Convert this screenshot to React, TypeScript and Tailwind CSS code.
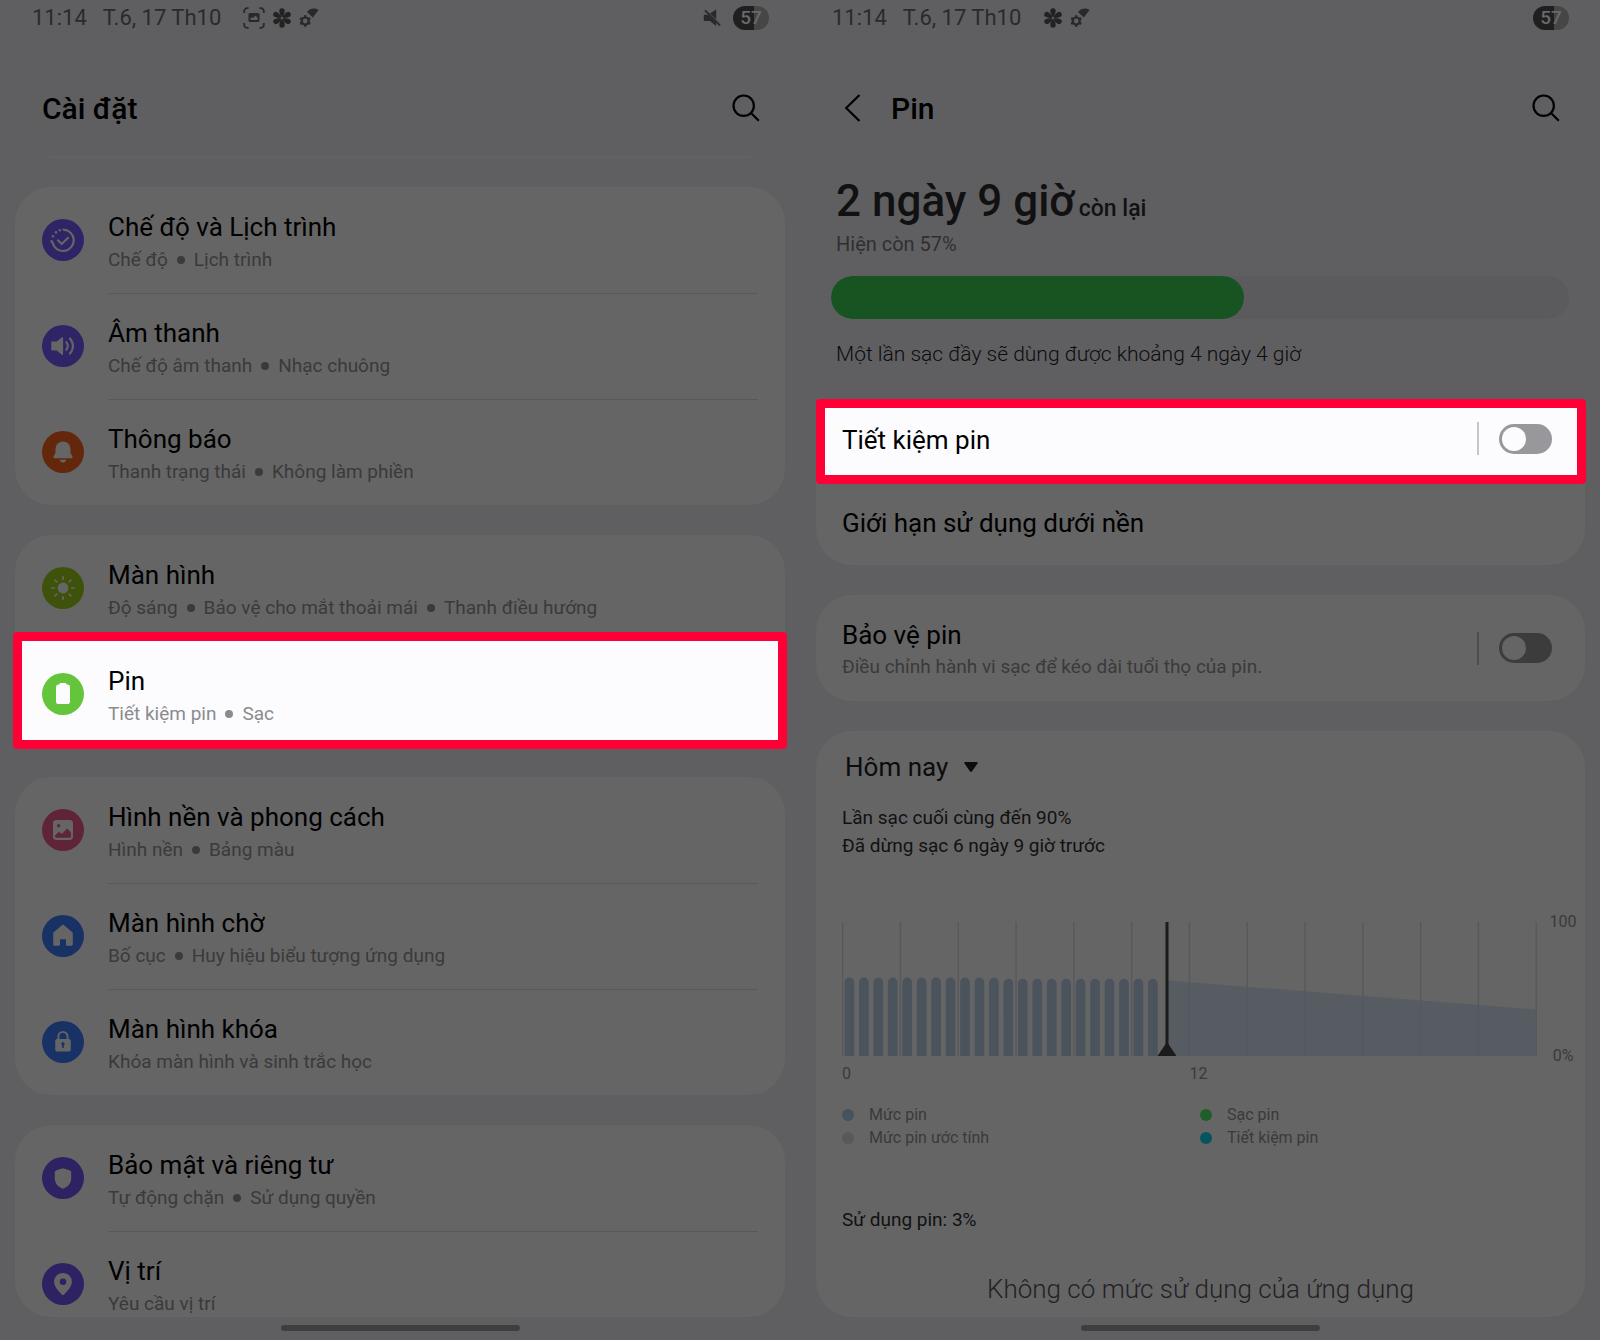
import type { ReactNode } from "react";

interface SettingItem {
  title: string;
  details: string[];
  color: string;
  icon: ReactNode;
  highlighted?: boolean;
}

const INK = "#656566";

const GROUPS: SettingItem[][] = [
  [
    {
      title: "Chế độ và Lịch trình",
      details: ["Chế độ", "Lịch trình"],
      color: "bg-[#2e2466]",
      icon: (
        <g fill="none" stroke={INK} strokeWidth="2.2" strokeLinecap="round" strokeLinejoin="round">
          <path d="M21.5 10.6a10.7 10.7 0 1 1-10.9 13" />
          <path d="M9.6 22.4v.1M11 17.2v.1M14 13.4v.1M17.8 11.2v.1" strokeWidth="2.6" />
          <path d="m16 21.3 3.7 3.7 6.4-6.2" />
        </g>
      ),
    },
    {
      title: "Âm thanh",
      details: ["Chế độ âm thanh", "Nhạc chuông"],
      color: "bg-[#2e2466]",
      icon: (
        <>
          <path d="M10.3 16.6h4.4l5.2-4.4c.6-.5 1.2-.2 1.2.6v16.4c0 .8-.6 1.1-1.2.6l-5.2-4.4h-4.4c-.7 0-1.1-.4-1.1-1.1v-6.6c0-.7.4-1.1 1.1-1.1z" fill={INK} />
          <g fill="none" stroke={INK} strokeWidth="2.1" strokeLinecap="round">
            <path d="M24.3 17.2a6.3 6.3 0 0 1 0 7.6" />
            <path d="M27.9 13.4a11 11 0 0 1 0 15.2" />
          </g>
        </>
      ),
    },
    {
      title: "Thông báo",
      details: ["Thanh trạng thái", "Không làm phiền"],
      color: "bg-[#63280b]",
      icon: (
        <g fill={INK}>
          <path d="M21 10.4c-4.3 0-7.2 3-7.4 7.2l-.2 4.3-1.8 3.6c-.5 1 0 1.8 1 1.8h16.8c1 0 1.5-.8 1-1.8l-1.8-3.6-.2-4.3c-.2-4.2-3.1-7.2-7.4-7.2z" />
          <path d="M17.8 28.8h6.4c-.5 1.9-1.6 2.8-3.2 2.8s-2.7-.9-3.2-2.8z" />
        </g>
      ),
    },
  ],
  [
    {
      title: "Màn hình",
      details: ["Độ sáng", "Bảo vệ cho mắt thoải mái", "Thanh điều hướng"],
      color: "bg-[#3e520b]",
      icon: (
        <>
          <circle cx="21" cy="21" r="5.4" fill={INK} />
          <path
            d="M21 9.8v2.4M21 29.8v2.4M9.8 21h2.4M29.8 21h2.4M13.1 13.1l1.7 1.7M27.2 27.2l1.7 1.7M13.1 28.9l1.7-1.7M27.2 14.8l1.7-1.7"
            stroke={INK}
            strokeWidth="1.7"
            strokeLinecap="round"
          />
        </>
      ),
    },
    {
      title: "Pin",
      details: ["Tiết kiệm pin", "Sạc"],
      color: "bg-[#64c43b]",
      highlighted: true,
      icon: (
        <path
          d="M18.6 10h4.8c.6 0 1 .4 1.1 1l.1.6h.8c1.600 0 2.600 1 2.600 2.600v14.300c0 1.600-1 2.600-2.600 2.600h-8.800c-1.600 0-2.600-1-2.600-2.600v-14.300c0-1.600 1-2.600 2.600-2.600h.8l.1-.6c.1-.6.5-1 1.100-1z"
          fill="#fcfcfe"
        />
      ),
    },
  ],
  [
    {
      title: "Hình nền và phong cách",
      details: ["Hình nền", "Bảng màu"],
      color: "bg-[#602439]",
      icon: (
        <>
          <rect x="11" y="11" width="20" height="20" rx="3.400" fill={INK} />
          <circle cx="16.600" cy="16.800" r="1.700" fill="#602439" />
          <path d="M13 26.400l3.900-3.700 3 2.300 5.200-5.600 3.900 4v3.900c0 .9-.6 1.500-1.500 1.500H14.500c-.9 0-1.500-.6-1.500-1.500z" fill="#602439" />
        </>
      ),
    },
    {
      title: "Màn hình chờ",
      details: ["Bố cục", "Huy hiệu biểu tượng ứng dụng"],
      color: "bg-[#183266]",
      icon: (
        <path
          d="M20 10.200c.6-.5 1.400-.5 2 0l8.100 6.700c.5.400.7.900.7 1.500v10.800c0 .9-.6 1.500-1.500 1.500h-4.200c-.7 0-1.100-.4-1.100-1.100v-5.400h-6v5.400c0 .7-.4 1.100-1.100 1.100h-4.200c-.9 0-1.500-.6-1.500-1.500V18.400c0-.6.2-1.100.7-1.500z"
          fill={INK}
        />
      ),
    },
    {
      title: "Màn hình khóa",
      details: ["Khóa màn hình và sinh trắc học"],
      color: "bg-[#183266]",
      icon: (
        <>
          <path d="M16.400 19v-3.500a4.600 4.600 0 0 1 9.200 0V19" fill="none" stroke={INK} strokeWidth="1.900" />
          <rect x="13.200" y="18" width="15.600" height="12.400" rx="2" fill={INK} />
          <path d="M21 21.200a1.700 1.700 0 0 0-.8 3.200V27h1.600v-2.600a1.700 1.700 0 0 0-.8-3.200z" fill="#183266" />
        </>
      ),
    },
  ],
  [
    {
      title: "Bảo mật và riêng tư",
      details: ["Tự động chặn", "Sử dụng quyền"],
      color: "bg-[#2e2262]",
      icon: (
        <path
          d="M21 11.200c2.400.5 4.700 1.200 7 2.200.8.300 1.200.9 1.200 1.700v6.300c0 4.800-3.200 8.200-8.200 10.400-5-2.200-8.200-5.600-8.200-10.400v-6.300c0-.8.4-1.400 1.200-1.700 2.300-1 4.600-1.700 7-2.200z"
          fill={INK}
        />
      ),
    },
    {
      title: "Vị trí",
      details: ["Yêu cầu vị trí"],
      color: "bg-[#2e2262]",
      icon: (
        <path
          fillRule="evenodd"
          d="M21 10c-5 0-8.900 3.800-8.900 8.600 0 5.300 4.500 9.600 7.800 13 .6.700 1.600.7 2.200 0 3.300-3.400 7.800-7.700 7.800-13C29.900 13.800 26 10 21 10zm0 12.100a3.300 3.300 0 1 1 0-6.600 3.300 3.300 0 0 1 0 6.600z"
          fill={INK}
        />
      ),
    },
  ],
];

const LEGEND = [
  { label: "Mức pin", dot: "bg-[#46535d]" },
  { label: "Sạc pin", dot: "bg-[#1f5e2a]" },
  { label: "Mức pin ước tính", dot: "bg-[#58585d]" },
  { label: "Tiết kiệm pin", dot: "bg-[#06545f]" },
];

// battery level per half hour, in percent
const LEVELS = [...Array(11).fill(58.6), ...Array(11).fill(57.6)];

function CaptureIcon() {
  return (
    <svg width="22" height="22" viewBox="0 0 22 22" aria-hidden="true">
      <path
        d="M1.200 6V4a2.800 2.800 0 0 1 2.800-2.800h1.600M16.400 1.200H18A2.800 2.800 0 0 1 20.800 4v2M20.800 16v2a2.800 2.800 0 0 1-2.800 2.800h-1.600M5.600 20.800H4A2.800 2.800 0 0 1 1.200 18v-2"
        fill="none"
        stroke="#292929"
        strokeWidth="1.800"
      />
      <path fillRule="evenodd" d="M7 6h8a1.500 1.500 0 0 1 1.500 1.500v6A1.500 1.500 0 0 1 15 15H7a1.500 1.500 0 0 1-1.500-1.500v-6A1.500 1.500 0 0 1 7 6zm.5 7h7v-2.500l-2-1.800-2.600 2.400-1.200-.9-1.200 1.200z" fill="#292929" />
    </svg>
  );
}

function FlowerIcon() {
  return (
    <svg width="20" height="20" viewBox="0 0 20 20" fill="#222" aria-hidden="true">
      {[0, 60, 120, 180, 240, 300].map((deg) => (
        <path key={deg} transform={`rotate(${deg} 10 10)`} d="M9.400 9.200C8.200 6.800 7.300 4.700 7.300 3a2.700 2.700 0 0 1 5.400 0c0 1.700-.9 3.800-2.100 6.200z" />
      ))}
      <circle cx="10" cy="10" r="1.500" fill="#555556" />
    </svg>
  );
}

function GearSignalIcon() {
  return (
    <svg width="20" height="20" viewBox="0 0 20 20" aria-hidden="true">
      <circle cx="6.200" cy="13" r="3.500" fill="none" stroke="#292929" strokeWidth="2.200" />
      <path
        d="M6.200 7.200v2M6.200 16.800v2M1.200 10.100l1.700 1M9.500 14.900l1.700 1M1.200 15.900l1.700-1M9.500 11.100l1.700-1"
        stroke="#292929"
        strokeWidth="2.400"
      />
      <path d="M8 4C11-.1 16.500-.3 19.600 2L13.800 9.600z" fill="#292929" />
    </svg>
  );
}

function MuteIcon() {
  return (
    <svg width="18" height="18" viewBox="0 0 18 18" aria-hidden="true">
      <path d="M.8 5.800h4.400l8 8V17L7 12H.8zM7 4.500 13.200.4v9.800z" fill="#292929" />
      <path d="m2 1.400 15 15" stroke="#292929" strokeWidth="1.900" />
    </svg>
  );
}

function SearchButton() {
  return (
    <button type="button" aria-label="Tìm kiếm" className="text-black">
      <svg width="28" height="28" viewBox="0 0 28 28" fill="none" stroke="currentColor" strokeWidth="2.200" aria-hidden="true">
        <circle cx="11.700" cy="11.700" r="10.200" />
        <path d="m19 19 7.800 7.800" />
      </svg>
    </button>
  );
}

function StatusBar({ extended = false }: { extended?: boolean }) {
  return (
    <div className="flex h-9 shrink-0 items-center justify-between pr-[31px] pl-8 text-[22px] text-[#2a2a2b]">
      <div className="flex items-center">
        <span className="pb-0.5">11:14</span>
        <span className="ml-4 pb-0.5">T.6, 17 Th10</span>
        <div className="ml-[22px] flex items-center gap-[7px]">
          {extended && <CaptureIcon />}
          <FlowerIcon />
          <GearSignalIcon />
        </div>
      </div>
      <div className="flex items-center gap-3">
        {extended && <MuteIcon />}
        <span className="flex h-6 w-9 items-center justify-center rounded-full bg-linear-to-r from-[#1f1f20] from-57% to-[#464647] to-57% text-[19px] font-medium text-[#69696b]">
          57
        </span>
      </div>
    </div>
  );
}

function HomeIndicator() {
  return (
    <div className="flex h-[23px] shrink-0 justify-center pt-2">
      <div className="h-1.5 w-[239px] rounded-full bg-[#3e3e3f]" />
    </div>
  );
}

function Highlight({ className }: { className: string }) {
  return (
    <span
      aria-hidden="true"
      className={`pointer-events-none absolute rounded-[4px] border-[9px] border-[#ff0036] bg-[#fcfcfe] ${className}`}
    />
  );
}

function SettingRow({ item, first }: { item: SettingItem; first: boolean }) {
  const line = first || item.highlighted ? "border-transparent" : "border-[#59595a]";
  return (
    <li className="relative">
      {item.highlighted && <Highlight className="-inset-x-0.5 -top-[9px] -bottom-0.5" />}
      <a href="#" className="relative flex min-h-[106px] items-center gap-6 px-[27px]">
        <svg className={`size-[42px] shrink-0 rounded-full ${item.color}`} viewBox="0 0 42 42" aria-hidden="true">
          {item.icon}
        </svg>
        <div className={`flex-1 border-t pt-[22px] pb-5 ${line}`}>
          <p className="text-[26px] leading-[34px] text-black">{item.title}</p>
          <p
            className={`mt-[3px] flex items-center text-[19px] leading-[26px] ${
              item.highlighted ? "text-[#8b8b8d]" : "text-[#3a3a3b]"
            }`}
          >
            {item.details.map((detail, i) => (
              <span key={detail} className="flex items-center">
                {i > 0 && <span className="mx-[9px] size-2 rounded-full bg-current" />}
                {detail}
              </span>
            ))}
          </p>
        </div>
      </a>
    </li>
  );
}

function Toggle({ id, lit = false }: { id: string; lit?: boolean }) {
  return (
    <div className="flex items-center gap-5">
      <span className={`h-[33px] w-0.5 ${lit ? "bg-[#c6c6c8]" : "bg-[#4e4e4f]"}`} />
      <input
        id={id}
        type="checkbox"
        role="switch"
        className={`flex h-[30px] w-[53px] appearance-none items-center rounded-full px-[3px] before:size-6 before:rounded-full checked:justify-end ${
          lit ? "bg-[#98989c] before:bg-[#fcfcfe]" : "bg-[#3c3c3d] before:bg-[#656566]"
        }`}
      />
    </div>
  );
}

function BatteryChart() {
  return (
    <div className="mt-[62px] pr-2 text-[16px] leading-6 text-[#3a3a3b]">
      <div className="flex gap-3">
        <svg className="h-[134px] min-w-0 flex-1" viewBox="0 0 695 134" preserveAspectRatio="none" role="img" aria-label="Mức pin hôm nay">
          {Array.from({ length: 13 }, (_, i) => (
            <rect key={i} x={i * 57.8} width="1.300" height="134" fill="#58585a" />
          ))}
          <path d="M326 58.500 695 87.500V134H326z" fill="#525960" fillOpacity="0.75" />
          {LEVELS.map((level, i) => {
            const top = 134 - level * 1.34;
            const x = 2.6 + i * 14.45;
            return (
              <path key={i} d={`M${x} 134V${top + 5}a4.800 5 0 0 1 9.600 0V134z`} fill="#4b535d" />
            );
          })}
          <rect x="323.500" width="3" height="134" fill="#1b1b1c" />
          <path d="m325 120 9.500 14h-19z" fill="#1b1b1c" />
        </svg>
        <div className="-my-3 flex w-7 flex-col items-center justify-between">
          <span>100</span>
          <span>0%</span>
        </div>
      </div>
      <div className="mt-1.5 mr-10 grid grid-cols-2">
        <span>0</span>
        <span>12</span>
      </div>
    </div>
  );
}

function SettingsScreen() {
  return (
    <section className="flex h-screen min-w-0 flex-col">
      <StatusBar extended />
      <header className="mt-6 flex h-24 shrink-0 items-center justify-between pr-10 pl-[42px]">
        <h1 className="text-[30px] font-medium text-black">Cài đặt</h1>
        <SearchButton />
      </header>
      <div className="mx-[50px] h-0.5 shrink-0 bg-[#626263]" />
      <div className="mx-[15px] mt-[29px] flex min-h-0 flex-1 flex-col gap-[30px]">
        {GROUPS.map((group, i) => (
          <ul
            key={i}
            className={`rounded-[36px] bg-[#656566] ${
              i === GROUPS.length - 1 ? "min-h-0 flex-1 overflow-hidden" : "shrink-0"
            }`}
          >
            {group.map((item, j) => (
              <SettingRow key={item.title} item={item} first={j === 0} />
            ))}
          </ul>
        ))}
      </div>
      <HomeIndicator />
    </section>
  );
}

function BatteryScreen() {
  return (
    <section className="flex h-screen min-w-0 flex-col">
      <StatusBar />
      <header className="mt-6 flex h-24 shrink-0 items-center pr-10 pl-11">
        <button type="button" aria-label="Quay lại" className="text-black">
          <svg width="17" height="28" viewBox="0 0 17 28" fill="none" stroke="currentColor" strokeWidth="2.200" aria-hidden="true">
            <path d="M15.500 1 2.200 14l13.300 13" />
          </svg>
        </button>
        <h1 className="ml-[30px] flex-1 text-[30px] font-medium text-black">Pin</h1>
        <SearchButton />
      </header>

      <div className="shrink-0 px-[31px] pt-[19px]">
        <div className="px-[5px]">
          <p className="flex items-baseline gap-1 font-medium text-[#111112]">
            <span className="text-[44px] leading-[52px]">2 ngày 9 giờ</span>
            <span className="text-[23px] leading-7">còn lại</span>
          </p>
          <p className="mt-1 text-[20px] leading-[26px] text-[#2f2f30]">Hiện còn 57%</p>
        </div>
        <div className="mt-[19px] h-[43px] overflow-hidden rounded-full bg-[#5b5b5d]">
          <div className="h-full w-[56%] rounded-full bg-[#185422]" />
        </div>
        <p className="mt-[21px] px-[5px] text-[21px] leading-7 font-[350] text-[#0c0c0d]">
          Một lần sạc đầy sẽ dùng được khoảng 4 ngày 4 giờ
        </p>
      </div>

      <div className="mr-[15px] ml-4 mt-[31px] flex min-h-0 flex-1 flex-col gap-[30px]">
        <div className="shrink-0 rounded-[36px] bg-[#656566] text-[26px] text-black">
          <div className="relative">
            <Highlight className="left-0 -right-px -bottom-0.5 top-0" />
            <div className="relative flex h-[83px] items-center justify-between pr-[33px] pl-[26px]">
              <label htmlFor="power-saving">Tiết kiệm pin</label>
              <div className="-mt-1">
                <Toggle id="power-saving" lit />
              </div>
            </div>
          </div>
          <a href="#" className="flex h-[83px] items-center px-[26px]">
            Giới hạn sử dụng dưới nền
          </a>
        </div>

        <div className="flex min-h-[106px] shrink-0 items-center justify-between rounded-[36px] bg-[#656566] pr-[33px] pl-[26px]">
          <div className="pt-0.5">
            <label htmlFor="battery-protection" className="block text-[26px] leading-[34px] text-black">
              Bảo vệ pin
            </label>
            <p className="mt-0.5 text-[19px] leading-[26px] text-[#3a3a3b]">
              Điều chỉnh hành vi sạc để kéo dài tuổi thọ của pin.
            </p>
          </div>
          <Toggle id="battery-protection" />
        </div>

        <div className="min-h-0 flex-1 overflow-hidden rounded-[36px] bg-[#656566] pt-[19px]">
          <div className="pl-[26px]">
            <button type="button" className="ml-[3px] flex items-center gap-4 text-[26px] leading-[34px] text-[#0c0c0d]">
              Hôm nay
              <svg width="14" height="10" viewBox="0 0 14 10" fill="currentColor" aria-hidden="true">
                <path d="M1.200 0h11.600c.9 0 1.300.9.700 1.600L7.900 9.400c-.5.600-1.300.6-1.800 0L.5 1.600C-.1.900.3 0 1.200 0z" />
              </svg>
            </button>
            <div className="mt-5 text-[19px] leading-7 text-[#111112]">
              <p>Lần sạc cuối cùng đến 90%</p>
              <p>Đã dừng sạc 6 ngày 9 giờ trước</p>
            </div>
            <BatteryChart />
            <ul className="mt-[17px] mr-[27px] grid grid-cols-2 text-[16px] leading-[23px] text-[#3a3a3b]">
              {LEGEND.map(({ label, dot }) => (
                <li key={label} className="flex items-center gap-[15px]">
                  <span className={`size-3 rounded-full ${dot}`} />
                  {label}
                </li>
              ))}
            </ul>
            <p className="mt-[57px] text-[19px] leading-7 text-[#111112]">Sử dụng pin: 3%</p>
          </div>
          <p className="mt-[38px] text-center text-[26px] leading-[34px] font-[350] text-[#222223]">
            Không có mức sử dụng của ứng dụng
          </p>
        </div>
      </div>
      <HomeIndicator />
    </section>
  );
}

export default function App() {
  return (
    <main className="grid min-h-screen grid-cols-2 bg-[#5f5f61] font-['Roboto','Noto_Sans',sans-serif]">
      <SettingsScreen />
      <BatteryScreen />
    </main>
  );
}
